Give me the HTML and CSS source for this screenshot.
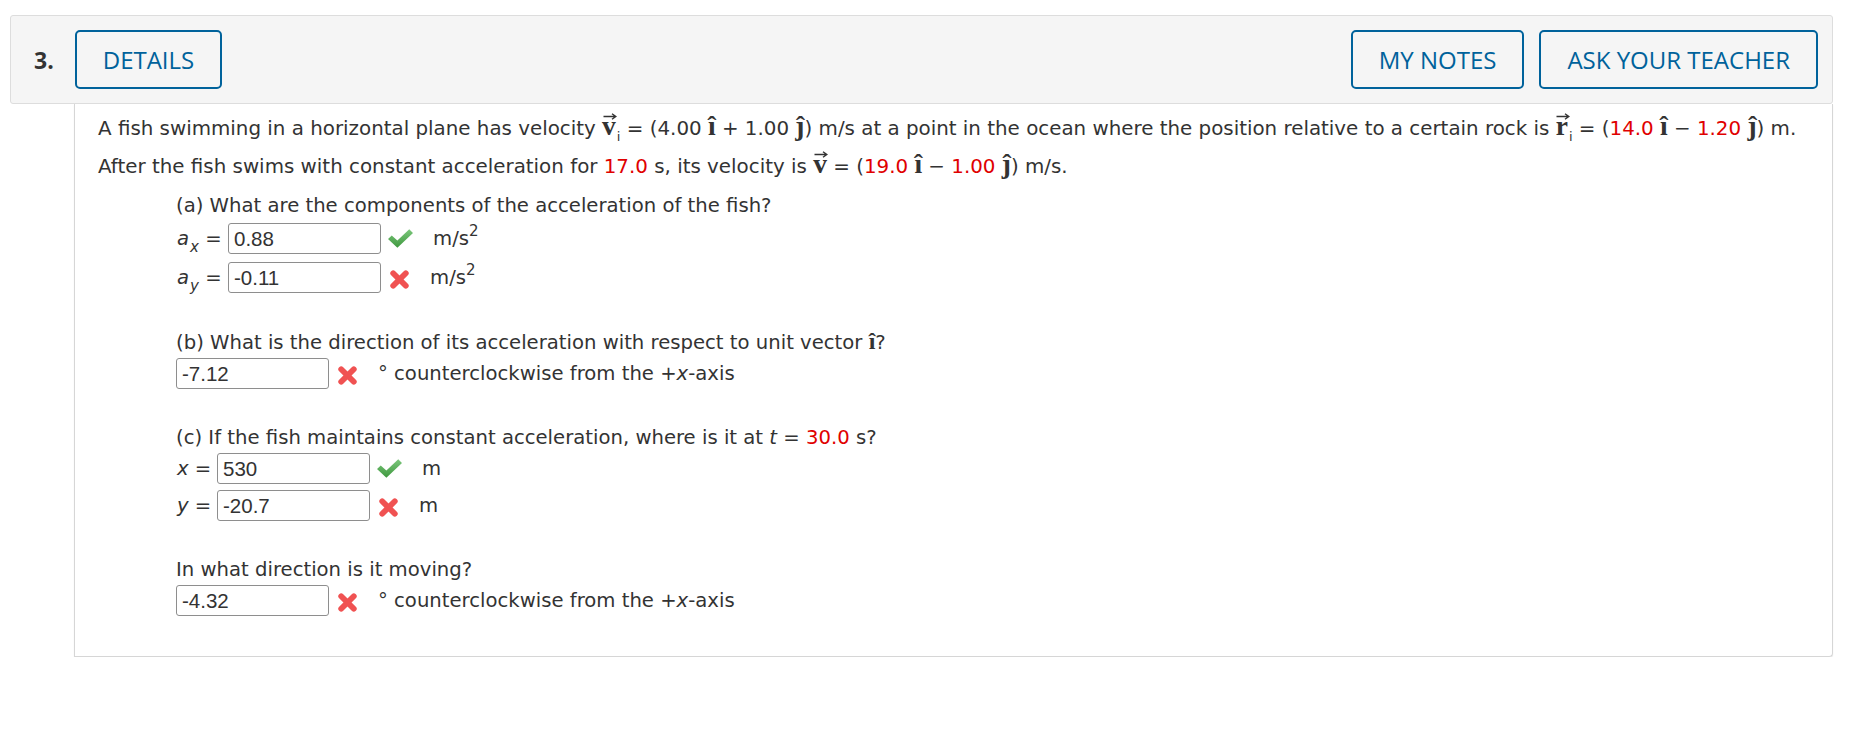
FILE: index.html
```html
<!DOCTYPE html>
<html lang="en">
<head>
<meta charset="utf-8">
<title>Question 3</title>
<link rel="stylesheet" href="styles.css">
</head>
<body>
<div class="page">
  <div class="qhead">
    <span class="qnum">3.</span>
    <button class="btn">DETAILS</button>
    <span class="spacer"></span>
    <button class="btn">MY NOTES</button>
    <button class="btn btn-last">ASK YOUR TEACHER</button>
  </div>
  <div class="qbody">
    <p class="stem">A fish swimming in a horizontal plane has velocity <span class="vec"><svg class="arrow" viewBox="0 0 14 7"><path d="M0.5 3.5 H12.5 M9 0.8 L12.8 3.5 L9 6.2" fill="none" stroke="#333" stroke-width="1.4"/></svg>v</span><sub class="si">i</sub> = (4.00 <span class="uv">î</span> + 1.00 <span class="uv">ĵ</span>) m/s at a point in the ocean where the position relative to a certain rock is <span class="vec"><svg class="arrow" viewBox="0 0 14 7"><path d="M0.5 3.5 H12.5 M9 0.8 L12.8 3.5 L9 6.2" fill="none" stroke="#333" stroke-width="1.4"/></svg>r</span><sub class="si">i</sub> = (<span class="red">14.0</span> <span class="uv">î</span> − <span class="red">1.20</span> <span class="uv">ĵ</span>) m.<br>After the fish swims with constant acceleration for <span class="red">17.0</span> s, its velocity is <span class="vec"><svg class="arrow" viewBox="0 0 14 7"><path d="M0.5 3.5 H12.5 M9 0.8 L12.8 3.5 L9 6.2" fill="none" stroke="#333" stroke-width="1.4"/></svg>v</span> = (<span class="red">19.0</span> <span class="uv">î</span> − <span class="red">1.00</span> <span class="uv">ĵ</span>) m/s.</p>

    <div class="part part-a">
      <div class="ptext ptext-a">(a) What are the components of the acceleration of the fish?</div>
      <div class="row row-a">
        <span class="lbl lbl-a"><i>a</i><sub class="vs">x</sub> =</span>
        <input class="inp" type="text" value="0.88">
        <svg class="ok" viewBox="0 0 24 18"><defs><linearGradient id="g1" x1="0" y1="0" x2="0" y2="1"><stop offset="0" stop-color="#7cc77c"/><stop offset="1" stop-color="#3f983f"/></linearGradient></defs><polygon points="0,9.5 3.6,6 9,11 20.4,0 24,3.6 9,17.8" fill="url(#g1)"/></svg>
        <span class="unit">m/s<sup>2</sup></span>
      </div>
      <div class="row row-a">
        <span class="lbl lbl-a"><i>a</i><sub class="vs">y</sub> =</span>
        <input class="inp" type="text" value="-0.11">
        <svg class="bad" viewBox="0 0 20 20"><line x1="4" y1="4" x2="16" y2="16" stroke="#f05252" stroke-width="5.5" stroke-linecap="round"/><line x1="16" y1="4" x2="4" y2="16" stroke="#f05252" stroke-width="5.5" stroke-linecap="round"/></svg>
        <span class="unit">m/s<sup>2</sup></span>
      </div>
    </div>

    <div class="part">
      <div class="ptext">(b) What is the direction of its acceleration with respect to unit vector <span class="uv">î</span>?</div>
      <div class="row">
        <input class="inp" type="text" value="-7.12">
        <svg class="bad" viewBox="0 0 20 20"><line x1="4" y1="4" x2="16" y2="16" stroke="#f05252" stroke-width="5.5" stroke-linecap="round"/><line x1="16" y1="4" x2="4" y2="16" stroke="#f05252" stroke-width="5.5" stroke-linecap="round"/></svg>
        <span class="unit">° counterclockwise from the +<i>x</i>-axis</span>
      </div>
    </div>

    <div class="part">
      <div class="ptext">(c) If the fish maintains constant acceleration, where is it at <i>t</i> = <span class="red">30.0</span> s?</div>
      <div class="row">
        <span class="lbl lbl-c"><i>x</i> =</span>
        <input class="inp" type="text" value="530">
        <svg class="ok" viewBox="0 0 24 18"><defs><linearGradient id="g2" x1="0" y1="0" x2="0" y2="1"><stop offset="0" stop-color="#7cc77c"/><stop offset="1" stop-color="#3f983f"/></linearGradient></defs><polygon points="0,9.5 3.6,6 9,11 20.4,0 24,3.6 9,17.8" fill="url(#g2)"/></svg>
        <span class="unit">m</span>
      </div>
      <div class="row">
        <span class="lbl lbl-c"><i>y</i> =</span>
        <input class="inp" type="text" value="-20.7">
        <svg class="bad" viewBox="0 0 20 20"><line x1="4" y1="4" x2="16" y2="16" stroke="#f05252" stroke-width="5.5" stroke-linecap="round"/><line x1="16" y1="4" x2="4" y2="16" stroke="#f05252" stroke-width="5.5" stroke-linecap="round"/></svg>
        <span class="unit">m</span>
      </div>
    </div>

    <div class="part">
      <div class="ptext">In what direction is it moving?</div>
      <div class="row">
        <input class="inp" type="text" value="-4.32">
        <svg class="bad" viewBox="0 0 20 20"><line x1="4" y1="4" x2="16" y2="16" stroke="#f05252" stroke-width="5.5" stroke-linecap="round"/><line x1="16" y1="4" x2="4" y2="16" stroke="#f05252" stroke-width="5.5" stroke-linecap="round"/></svg>
        <span class="unit">° counterclockwise from the +<i>x</i>-axis</span>
      </div>
    </div>
  </div>
</div>
</body>
</html>
```

FILE: styles.css
```css
html, body {
  margin: 0;
  background: #ffffff;
}

body {
  font-family: "DejaVu Sans", Verdana, sans-serif;
  font-size: 19.65px;
  color: #333333;
}

.page {
  margin: 15px 20px 0 10px;
}

/* ---------- header bar ---------- */
.qhead {
  display: flex;
  align-items: center;
  background: #f5f5f5;
  border: 1px solid #dddddd;
  border-radius: 3px;
  padding: 14px 14px 14px 22px;
}

.qnum {
  font-family: "Open Sans", sans-serif;
  font-weight: 700;
  font-size: 23px;
  color: #333333;
  margin-left: 1px;
  margin-right: 21px;
}

.spacer {
  flex: 1;
}

.btn {
  font-family: "Open Sans", sans-serif;
  font-size: 24px;
  color: #00629b;
  background: transparent;
  border: 2px solid #00629b;
  border-radius: 5px;
  height: 59px;
  padding: 0 26px;
  margin: 0;
  cursor: pointer;
}

.btn-last {
  margin-left: 15px;
}

/* ---------- question body ---------- */
.qbody {
  margin-left: 64px;
  border: 1px solid #d6d6d6;
  border-top: none;
  border-radius: 0 0 4px 0;
  box-shadow: 0 1px 1px rgba(0, 0, 0, 0.12);
  padding: 6px 23px 37px 23px;
}

.stem {
  margin: 0;
  line-height: 38px;
  font-size: 19.85px;
}

.red {
  color: #e00000;
}

.vec {
  position: relative;
  font-family: "Liberation Serif", "Times New Roman", serif;
  font-weight: 700;
  font-size: 27.5px;
  line-height: 0;
}

.arrow {
  position: absolute;
  left: 0.5px;
  top: 3px;
  width: 14px;
  height: 7px;
}

.si {
  font-size: 13px;
  line-height: 0;
  vertical-align: -6px;
  margin-left: 1px;
}

.uv {
  font-family: "Liberation Serif", "Times New Roman", serif;
  font-weight: 700;
  font-size: 27.5px;
  line-height: 0;
}

/* ---------- parts ---------- */
.part {
  margin-left: 78px;
}

.part + .part {
  margin-top: 30px;
}

.part-a {
  margin-top: 1px;
}

.ptext {
  padding-top: 4px;
  line-height: 24px;
  white-space: nowrap;
}

.ptext-a {
  padding-top: 6px;
  line-height: 26px;
}

.ptext .uv {
  font-size: 24px;
}

.row {
  display: flex;
  align-items: center;
  height: 37px;
  white-space: nowrap;
}

.row-a {
  height: 39px;
}

.lbl {
  flex-shrink: 0;
  white-space: nowrap;
}

.lbl-a {
  width: 52px;
  padding-left: 1px;
  box-sizing: border-box;
}

.lbl-c {
  width: 41px;
  padding-left: 1px;
  box-sizing: border-box;
}

.vs {
  font-style: italic;
  font-size: 15px;
  line-height: 0;
  vertical-align: -7px;
  margin-left: 1px;
}

.inp {
  box-sizing: border-box;
  width: 153px;
  height: 31px;
  margin: 0;
  border: 1px solid #8e8e8e;
  border-radius: 3px;
  padding: 0 5px;
  font-family: "Liberation Sans", Arial, sans-serif;
  font-size: 20.5px;
  color: #333333;
  background: #ffffff;
  outline: none;
}

.ok {
  width: 25px;
  height: 19px;
  margin-left: 7px;
  flex-shrink: 0;
}

.bad {
  width: 21px;
  height: 21px;
  margin-left: 8px;
  flex-shrink: 0;
  position: relative;
  top: 2px;
}

.unit {
  margin-left: 20px;
}

.unit sup {
  font-size: 15px;
  line-height: 0;
  vertical-align: 9px;
}
```
